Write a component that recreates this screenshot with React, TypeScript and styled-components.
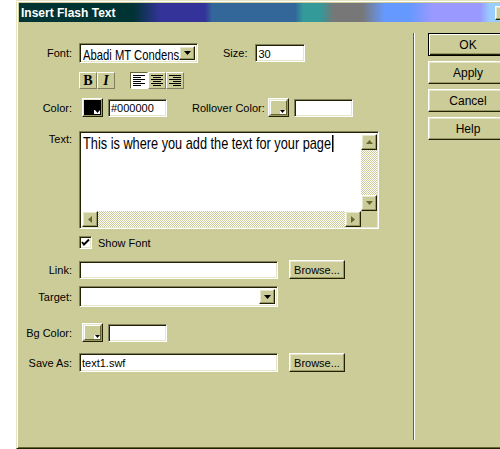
import React from "react";
import styled, { createGlobalStyle, css } from "styled-components";

const FACE = "#cccc99";
const LIGHT = "#e6e6cc";
const SHADOW = "#999966";
const DARK = "#222200";

const Global = createGlobalStyle`
  html, body { margin: 0; padding: 0; background: #fff; overflow: hidden; }
  body { font-family: "Liberation Sans", Arial, sans-serif; font-size: 11px; color: #000; }
  * { box-sizing: border-box; }
`;

const raised = css`
  background: ${FACE};
  border: 1px solid;
  border-color: #ffffff ${DARK} ${DARK} #ffffff;
  box-shadow: inset -1px -1px 0 ${SHADOW}, inset 1px 1px 0 ${LIGHT};
`;

const sunken = css`
  border: 1px solid;
  border-color: #808060 #ffffff #ffffff #808060;
  box-shadow: inset 1px 1px 0 ${DARK}, inset -1px -1px 0 ${LIGHT};
`;

const Win = styled.div`
  margin-left: 16px;
  width: 500px;
  height: 449px;
  background: ${FACE};
  border: 1px solid;
  border-color: #e6e6c4 ${DARK} ${DARK} #e6e6c4;
  box-shadow: inset 1px 1px 0 #fff, inset -1px -1px 0 #666633;
  padding: 2px;
  display: flex;
  flex-direction: column;
`;

const TitleBar = styled.div`
  height: 19px;
  flex-shrink: 0;
  display: flex;
  align-items: center;
  padding: 0 2px;
  color: #fff;
  font-weight: bold;
  font-size: 12px;
  background: linear-gradient(
    to right,
    #003333 0px,
    #003333 114px,
    #333399 141px,
    #333399 186px,
    #336699 193px,
    #336699 276px,
    #339999 284px,
    #339999 301px,
    #777777 315px,
    #777777 343px,
    #6699ff 366px,
    #6699ff 391px,
    #9999ff 413px,
    #9999ff 461px,
    #99ccff 471px
  );
`;

const CloseBtn = styled.div`
  margin-left: auto;
  width: 16px;
  height: 14px;
  ${raised};
  color: #000;
  font-size: 11px;
  line-height: 11px;
  text-align: center;
`;

const Body = styled.div`
  display: flex;
  flex: 1;
`;

const Form = styled.div`
  width: 394px;
  flex-shrink: 0;
  padding-top: 21px;
  display: flex;
  flex-direction: column;
`;

const Separator = styled.div`
  width: 2px;
  height: 407px;
  margin-top: 11px;
  border-left: 1px solid #666633;
  border-right: 1px solid #fff;
`;

const Side = styled.div`
  padding: 11px 0 0 13px;
  display: flex;
  flex-direction: column;
  gap: 5px;
`;

const Row = styled.div<{ $mt: number; $h: number; $top?: boolean }>`
  display: flex;
  align-items: ${(p) => (p.$top ? "flex-start" : "center")};
  margin-top: ${(p) => p.$mt}px;
  height: ${(p) => p.$h}px;
`;

const Label = styled.span<{ $pt?: number }>`
  width: 53px;
  margin-right: 7px;
  text-align: right;
  white-space: nowrap;
  flex-shrink: 0;
  padding-top: ${(p) => p.$pt ?? 0}px;
`;

const InlineLabel = styled.span<{ $ml: number }>`
  margin-left: ${(p) => p.$ml}px;
  white-space: nowrap;
`;

const Field = styled.div<{ $w: number; $h: number; $ml?: number }>`
  width: ${(p) => p.$w}px;
  height: ${(p) => p.$h}px;
  margin-left: ${(p) => p.$ml ?? 0}px;
  flex-shrink: 0;
  ${sunken};
  background: #fff;
  display: flex;
  align-items: center;
  padding: 1px 2px 0 2px;
  white-space: nowrap;
  overflow: hidden;
`;

const SelectBox = styled.div<{ $w: number; $h: number }>`
  width: ${(p) => p.$w}px;
  height: ${(p) => p.$h}px;
  flex-shrink: 0;
  ${sunken};
  background: #fff;
  display: flex;
  align-items: stretch;
  padding: 2px;
`;

const SelectText = styled.div`
  flex: 1;
  overflow: hidden;
  white-space: nowrap;
  padding-left: 1px;
`;

const Condensed = styled.span<{ $size: number }>`
  display: inline-block;
  font-size: ${(p) => p.$size}px;
  transform: scaleX(0.75);
  transform-origin: left center;
  white-space: nowrap;
`;

const DropBtn = styled.div`
  width: 16px;
  flex-shrink: 0;
  ${raised};
  display: flex;
  align-items: center;
  justify-content: center;
`;

const StyleBtn = styled.div<{ $pressed?: boolean }>`
  width: 18px;
  height: 17px;
  display: flex;
  align-items: center;
  justify-content: center;
  border: 1px solid;
  ${(p) =>
    p.$pressed
      ? css`
          background: #fff;
          border-color: #666633 #fff #fff #666633;
        `
      : css`
          background: ${FACE};
          border-color: #fff #808060 #808060 #fff;
        `}
  font-family: "Liberation Serif", "Times New Roman", serif;
  font-weight: bold;
  font-size: 14px;
`;

const BtnGroup = styled.div<{ $ml?: number }>`
  display: flex;
  margin-left: ${(p) => p.$ml ?? 0}px;
`;

const Italic = styled.span`
  font-style: italic;
`;

const Swatch = styled.div<{ $ml: number }>`
  position: relative;
  width: 21px;
  height: 19px;
  margin-left: ${(p) => p.$ml}px;
  flex-shrink: 0;
  ${raised};
  padding: 1px;
`;

const SwatchFill = styled.div<{ $fill?: string }>`
  width: 100%;
  height: 100%;
  ${(p) =>
    p.$fill
      ? css`
          background: ${p.$fill};
        `
      : css`
          background: ${FACE};
          border: 1px solid;
          border-color: #fff #666633 #666633 #fff;
        `}
`;

const SwatchArrow = styled.div`
  position: absolute;
  right: 2px;
  bottom: 2px;
  width: 6px;
  height: 4px;
  background: #fff;
  display: flex;
  align-items: flex-start;
  justify-content: center;
`;

const TextBox = styled.div`
  width: 300px;
  height: 98px;
  flex-shrink: 0;
  ${sunken};
  background: #fff;
  padding: 2px 1px 1px 2px;
  display: grid;
  grid-template-columns: 1fr 16px;
  grid-template-rows: 1fr 16px;
`;

const TextContent = styled.div`
  line-height: 19px;
  padding-left: 1px;
  white-space: nowrap;
  overflow: hidden;
`;

const Caret = styled.span`
  display: inline-block;
  width: 2px;
  height: 17px;
  margin-left: 1px;
  background: #000;
  vertical-align: -3px;
`;

const ScrollV = styled.div`
  display: flex;
  flex-direction: column;
`;

const ScrollH = styled.div`
  display: flex;
`;

const Track = styled.div`
  flex: 1;
  background-color: #fff;
  background-image: conic-gradient(${FACE} 25%, transparent 0 50%, ${FACE} 0 75%, transparent 0);
  background-size: 2px 2px;
`;

const ScrollBtn = styled.div`
  width: 16px;
  height: 16px;
  flex-shrink: 0;
  ${raised};
  display: flex;
  align-items: center;
  justify-content: center;
`;

const Corner = styled.div`
  background: ${FACE};
`;

const Check = styled.div`
  width: 13px;
  height: 13px;
  ${sunken};
  background: #fff;
  display: flex;
  align-items: center;
  justify-content: center;
`;

const CheckLabel = styled.span`
  margin-left: 6px;
`;

const Btn = styled.div<{ $w: number; $h: number; $ml?: number; $def?: boolean }>`
  width: ${(p) => p.$w}px;
  height: ${(p) => p.$h}px;
  margin-left: ${(p) => p.$ml ?? 0}px;
  flex-shrink: 0;
  display: flex;
  align-items: center;
  justify-content: center;
  font-size: 11px;
  ${raised};
  ${(p) =>
    p.$def &&
    css`
      border: 1px solid #000;
      box-shadow: inset 1px 1px 0 #fff, inset -1px -1px 0 ${DARK}, inset -2px -2px 0 ${SHADOW};
    `}
`;

const SideBtn = styled(Btn)`
  font-size: 12px;
`;

const Tri = ({ dir, color = "#000", w = 7 }: { dir: "up" | "down" | "left" | "right"; color?: string; w?: number }) => {
  const h = Math.ceil(w / 2);
  if (dir === "up" || dir === "down") {
    const pts = dir === "down" ? `0,0 ${w},0 ${w / 2},${h}` : `0,${h} ${w},${h} ${w / 2},0`;
    return (
      <svg width={w} height={h} viewBox={`0 0 ${w} ${h}`}>
        <polygon points={pts} fill={color} />
      </svg>
    );
  }
  const pts = dir === "right" ? `0,0 ${h},${w / 2} 0,${w}` : `${h},0 0,${w / 2} ${h},${w}`;
  return (
    <svg width={h} height={w} viewBox={`0 0 ${h} ${w}`}>
      <polygon points={pts} fill={color} />
    </svg>
  );
};

const AlignIcon = ({ kind }: { kind: "left" | "center" | "right" }) => {
  const lines = [0, 1, 2, 3, 4, 5].map((i) => {
    const len = i % 2 === 0 ? 12 : 8;
    const x = kind === "left" ? 0 : kind === "right" ? 12 - len : (12 - len) / 2;
    return <rect key={i} x={x} y={i * 2} width={len} height={1} fill="#000" />;
  });
  return (
    <svg width={12} height={11} viewBox="0 0 12 11">
      {lines}
    </svg>
  );
};

const ColorSwatch = ({ ml, fill }: { ml: number; fill?: string }) => (
  <Swatch $ml={ml}>
    <SwatchFill $fill={fill} />
    <SwatchArrow>
      <Tri dir="down" w={5} />
    </SwatchArrow>
  </Swatch>
);

export default function App() {
  return (
    <>
      <Global />
      <Win>
        <TitleBar>
          <span>Insert Flash Text</span>
          <CloseBtn>×</CloseBtn>
        </TitleBar>
        <Body>
          <Form>
            <Row $mt={0} $h={20}>
              <Label>Font:</Label>
              <SelectBox $w={119} $h={20}>
                <SelectText>
                  <Condensed $size={15}>Abadi MT Condensed</Condensed>
                </SelectText>
                <DropBtn>
                  <Tri dir="down" />
                </DropBtn>
              </SelectBox>
              <InlineLabel $ml={25}>Size:</InlineLabel>
              <Field $w={50} $h={18} $ml={8}>
                30
              </Field>
            </Row>

            <Row $mt={9} $h={17}>
              <Label />
              <BtnGroup>
                <StyleBtn>B</StyleBtn>
                <StyleBtn>
                  <Italic>I</Italic>
                </StyleBtn>
              </BtnGroup>
              <BtnGroup $ml={15}>
                <StyleBtn $pressed>
                  <AlignIcon kind="left" />
                </StyleBtn>
                <StyleBtn>
                  <AlignIcon kind="center" />
                </StyleBtn>
                <StyleBtn>
                  <AlignIcon kind="right" />
                </StyleBtn>
              </BtnGroup>
            </Row>

            <Row $mt={9} $h={19}>
              <Label>Color:</Label>
              <ColorSwatch ml={3} fill="#000" />
              <Field $w={59} $h={18} $ml={5}>
                #000000
              </Field>
              <InlineLabel $ml={25}>Rollover Color:</InlineLabel>
              <ColorSwatch ml={3} />
              <Field $w={59} $h={18} $ml={5} />
            </Row>

            <Row $mt={14} $h={98} $top>
              <Label $pt={2}>Text:</Label>
              <TextBox>
                <TextContent>
                  <Condensed $size={17}>
                    This is where you add the text for your page
                    <Caret />
                  </Condensed>
                </TextContent>
                <ScrollV>
                  <ScrollBtn>
                    <Tri dir="up" color="#666633" />
                  </ScrollBtn>
                  <Track />
                  <ScrollBtn>
                    <Tri dir="down" color="#666633" />
                  </ScrollBtn>
                </ScrollV>
                <ScrollH>
                  <ScrollBtn>
                    <Tri dir="left" color="#666633" />
                  </ScrollBtn>
                  <Track />
                  <ScrollBtn>
                    <Tri dir="right" color="#666633" />
                  </ScrollBtn>
                </ScrollH>
                <Corner />
              </TextBox>
            </Row>

            <Row $mt={7} $h={13}>
              <Label />
              <Check>
                <svg width="9" height="9" viewBox="0 0 9 9">
                  <polyline points="1,4 3,6.5 8,1.5" fill="none" stroke="#000" strokeWidth="2" />
                </svg>
              </Check>
              <CheckLabel>Show Font</CheckLabel>
            </Row>

            <Row $mt={11} $h={19}>
              <Label>Link:</Label>
              <Field $w={199} $h={18} />
              <Btn $w={56} $h={19} $ml={11}>
                Browse...
              </Btn>
            </Row>

            <Row $mt={7} $h={21}>
              <Label>Target:</Label>
              <SelectBox $w={199} $h={21}>
                <SelectText />
                <DropBtn>
                  <Tri dir="down" />
                </DropBtn>
              </SelectBox>
            </Row>

            <Row $mt={16} $h={19}>
              <Label>Bg Color:</Label>
              <ColorSwatch ml={3} />
              <Field $w={59} $h={18} $ml={5} />
            </Row>

            <Row $mt={11} $h={19}>
              <Label>Save As:</Label>
              <Field $w={199} $h={19}>
                text1.swf
              </Field>
              <Btn $w={56} $h={19} $ml={11}>
                Browse...
              </Btn>
            </Row>
          </Form>
          <Separator />
          <Side>
            <SideBtn $w={80} $h={23} $def>
              OK
            </SideBtn>
            <SideBtn $w={80} $h={23}>
              Apply
            </SideBtn>
            <SideBtn $w={80} $h={23}>
              Cancel
            </SideBtn>
            <SideBtn $w={80} $h={23}>
              Help
            </SideBtn>
          </Side>
        </Body>
      </Win>
    </>
  );
}
